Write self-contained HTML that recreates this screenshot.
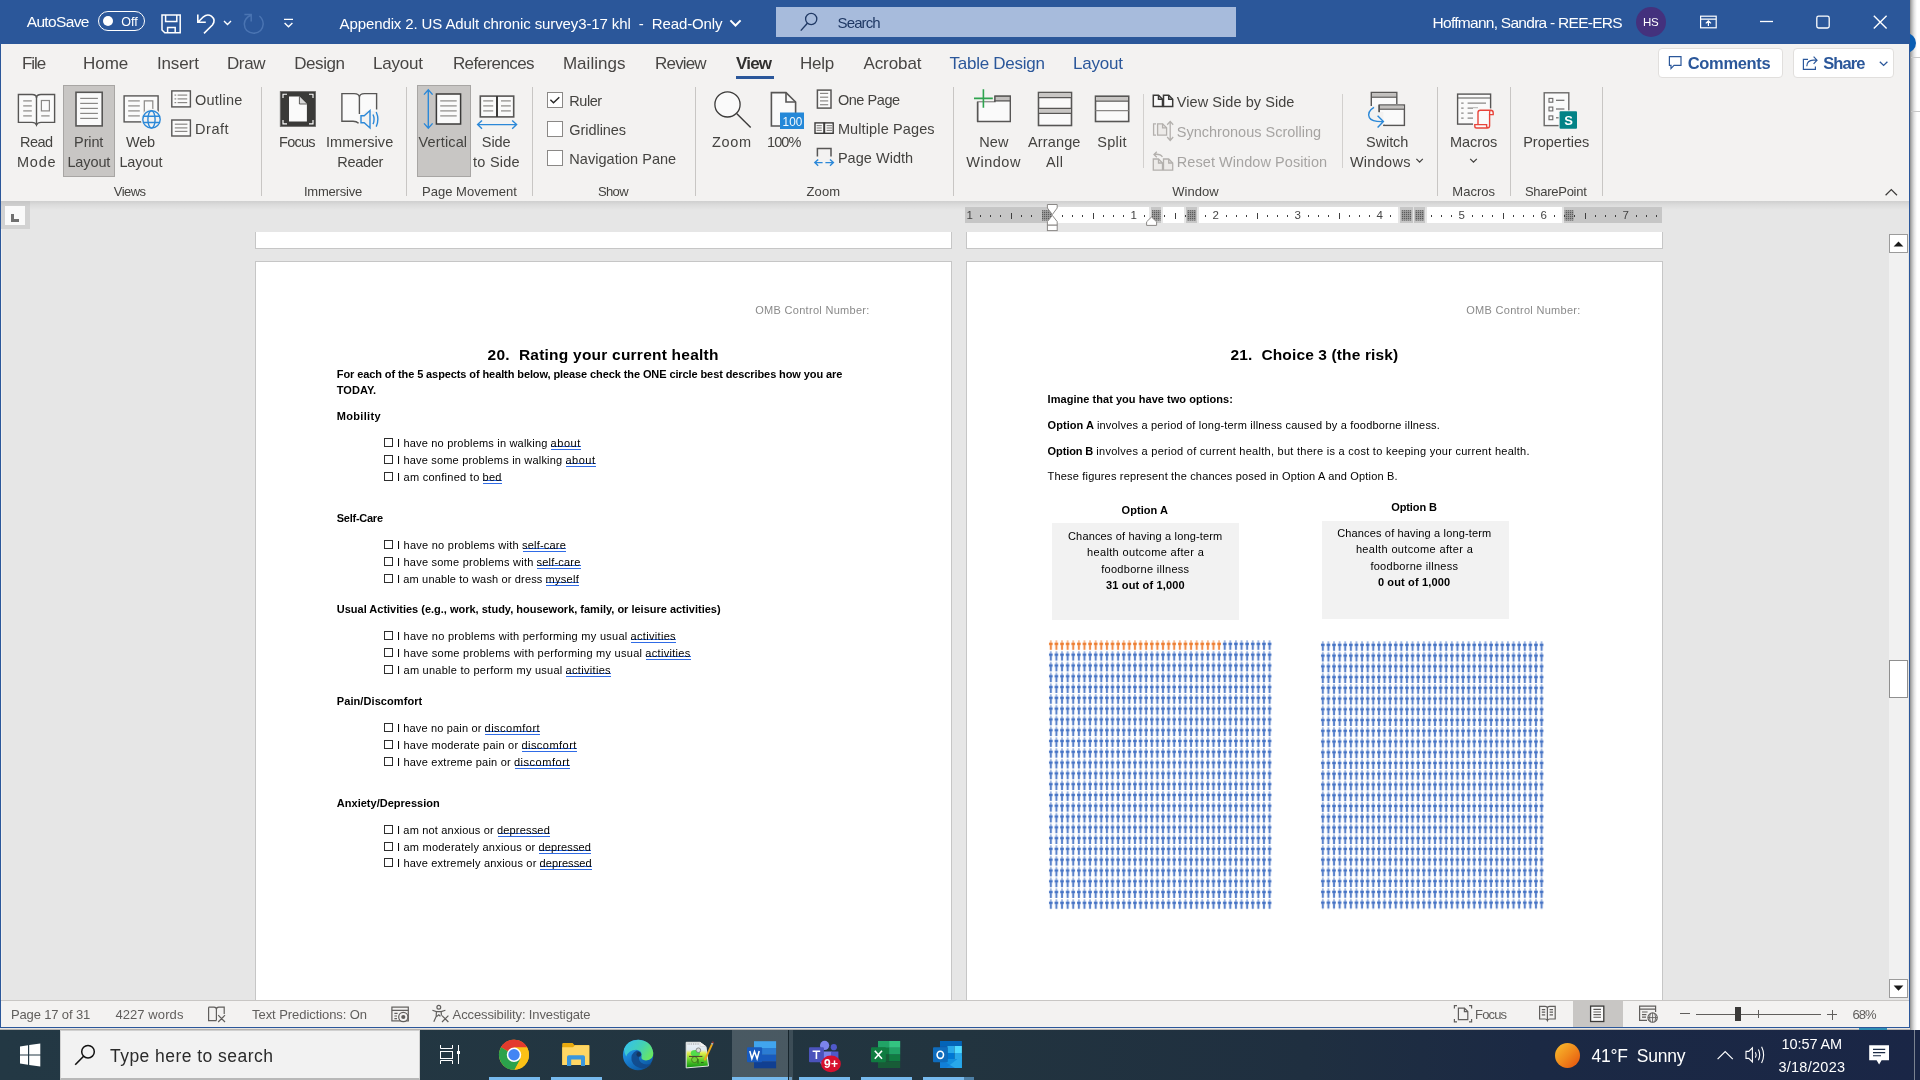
<!DOCTYPE html>
<html><head><meta charset="utf-8"><title>Word</title><style>
html,body{margin:0;padding:0;}
body{width:1920px;height:1080px;overflow:hidden;position:relative;background:#fff;font-family:"Liberation Sans",sans-serif;}
#r{position:absolute;left:0;top:0;width:1920px;height:1080px;will-change:transform;}
#r div,#r span,#r svg{position:absolute;}
#r span{white-space:pre;line-height:1;}
#r svg{overflow:visible;}
</style></head><body><div id="r">
<div style="left:1910px;top:0px;width:10px;height:1030px;background:#ffffff;"></div>
<div style="left:1910px;top:0px;width:7px;height:1030px;background:linear-gradient(90deg,#8e8e8e 0,#b9b9b9 25%,#e4e4e4 60%,#ffffff 100%);"></div>
<div style="left:1911px;top:57px;width:9px;height:1px;background:#c8c8c8;"></div>
<div style="left:1911px;top:111px;width:9px;height:1px;background:#c8c8c8;"></div>
<div style="left:1896px;top:33px;width:20px;height:20px;background:#0a5db3;border-radius:10px;"></div>
<div style="left:0px;top:0px;width:1910px;height:44px;background:#2b579a;"></div>
<div style="left:0px;top:44px;width:1910px;height:157px;background:#f3f2f1;"></div>
<div style="left:0px;top:201px;width:1910px;height:799px;background:#e6e6e6;"></div>
<div style="left:0px;top:201px;width:1910px;height:9px;background:linear-gradient(180deg,#cfcfcf 0,#dcdcdc 45%,#e6e6e6 100%);"></div>
<div style="left:0px;top:44px;width:1px;height:984px;background:#2b579a;"></div>
<div style="left:1909px;top:44px;width:1px;height:984px;background:#2b579a;"></div>
<div style="left:776px;top:7px;width:460px;height:30px;background:#a7bbdc;"></div>
<div style="left:1636px;top:7px;width:30px;height:30px;background:#44317d;border-radius:15px;"></div>
<div style="left:98px;top:11px;width:47px;height:20px;background:transparent;border:1.4px solid #fff;border-radius:10px;box-sizing:border-box;"></div>
<div style="left:102.8px;top:16px;width:10px;height:10px;background:#fff;border-radius:5px;"></div>
<div style="left:736px;top:76px;width:38px;height:3px;background:#2b579a;"></div>
<div style="left:1658px;top:48px;width:125px;height:30px;background:#fff;border:1px solid #e1dfdd;border-radius:4px;box-sizing:border-box;"></div>
<div style="left:1793px;top:48px;width:101px;height:30px;background:#fff;border:1px solid #e1dfdd;border-radius:4px;box-sizing:border-box;"></div>
<div style="left:63px;top:85px;width:52px;height:92px;background:#c8c6c4;border:1px solid #a8a6a4;box-sizing:border-box;"></div>
<div style="left:417px;top:85px;width:54px;height:92px;background:#c8c6c4;border:1px solid #a8a6a4;box-sizing:border-box;"></div>
<div style="left:261px;top:87px;width:1px;height:109px;background:#c8c6c4;"></div>
<div style="left:406px;top:87px;width:1px;height:109px;background:#c8c6c4;"></div>
<div style="left:532px;top:87px;width:1px;height:109px;background:#c8c6c4;"></div>
<div style="left:695px;top:87px;width:1px;height:109px;background:#c8c6c4;"></div>
<div style="left:953px;top:87px;width:1px;height:109px;background:#c8c6c4;"></div>
<div style="left:1437px;top:87px;width:1px;height:109px;background:#c8c6c4;"></div>
<div style="left:1510px;top:87px;width:1px;height:109px;background:#c8c6c4;"></div>
<div style="left:1602px;top:87px;width:1px;height:109px;background:#c8c6c4;"></div>
<div style="left:1143px;top:94px;width:1px;height:74px;background:#d2d0ce;"></div>
<div style="left:1342px;top:94px;width:1px;height:74px;background:#d2d0ce;"></div>
<div style="left:547px;top:92px;width:16px;height:16px;background:#fff;border:1px solid #8a8886;box-sizing:border-box;"></div>
<div style="left:547px;top:121px;width:16px;height:16px;background:#fff;border:1px solid #8a8886;box-sizing:border-box;"></div>
<div style="left:547px;top:150px;width:16px;height:16px;background:#fff;border:1px solid #8a8886;box-sizing:border-box;"></div>
<div style="left:965px;top:207px;width:83px;height:16px;background:#c6c6c6;"></div>
<div style="left:1048px;top:207px;width:101px;height:16px;background:#fff;"></div>
<div style="left:1151px;top:207px;width:10px;height:16px;background:#c6c6c6;"></div>
<div style="left:1163px;top:207px;width:21px;height:16px;background:#fff;"></div>
<div style="left:1186px;top:207px;width:11px;height:16px;background:#c6c6c6;"></div>
<div style="left:1199px;top:207px;width:199px;height:16px;background:#fff;"></div>
<div style="left:1400px;top:207px;width:12.5px;height:16px;background:#c6c6c6;"></div>
<div style="left:1414px;top:207px;width:11px;height:16px;background:#c6c6c6;"></div>
<div style="left:1427px;top:207px;width:135px;height:16px;background:#fff;"></div>
<div style="left:1564px;top:207px;width:98px;height:16px;background:#c6c6c6;"></div>
<div style="left:1px;top:229px;width:1px;height:771px;background:#f0efee;"></div>
<div style="left:1px;top:201px;width:29px;height:28px;background:#d2d2d2;"></div>
<div style="left:1px;top:201px;width:29px;height:6px;background:linear-gradient(180deg,#c6c6c6,#d2d2d2);"></div>
<div style="left:5px;top:206px;width:20.3px;height:19.4px;background:#fafafa;"></div>
<div style="left:11px;top:214px;width:3px;height:8px;background:#707070;"></div>
<div style="left:11px;top:219px;width:8px;height:3px;background:#707070;"></div>
<div style="left:255px;top:232px;width:697px;height:17px;background:#fff;border:1px solid #c6c6c6;border-top:none;box-sizing:border-box;"></div>
<div style="left:255px;top:261px;width:697px;height:739px;background:#fff;border:1px solid #c6c6c6;border-bottom:none;box-sizing:border-box;"></div>
<div style="left:966px;top:232px;width:697px;height:17px;background:#fff;border:1px solid #c6c6c6;border-top:none;box-sizing:border-box;"></div>
<div style="left:966px;top:261px;width:697px;height:739px;background:#fff;border:1px solid #c6c6c6;border-bottom:none;box-sizing:border-box;"></div>
<div style="left:1052px;top:523px;width:187px;height:97px;background:#f2f2f2;"></div>
<div style="left:1322px;top:521px;width:187px;height:98px;background:#f2f2f2;"></div>
<div style="left:1889px;top:234px;width:19px;height:764px;background:#f1f1f1;"></div>
<div style="left:1889px;top:234px;width:19px;height:19px;background:#fff;border:1px solid #9b9b9b;box-sizing:border-box;"></div>
<div style="left:1889px;top:979px;width:19px;height:19px;background:#fff;border:1px solid #9b9b9b;box-sizing:border-box;"></div>
<div style="left:1889px;top:660px;width:19px;height:38px;background:#fff;border:1px solid #8f8f8f;box-sizing:border-box;"></div>
<div style="left:1px;top:1000px;width:1908px;height:1px;background:#c8c6c4;"></div>
<div style="left:1px;top:1001px;width:1908px;height:26px;background:#f3f2f1;"></div>
<div style="left:0px;top:1027px;width:1910px;height:1px;background:#2b579a;"></div>
<div style="left:0px;top:1028px;width:1910px;height:1px;background:#e6e4e1;"></div>
<div style="left:0px;top:1029px;width:1910px;height:1px;background:#b6b3af;"></div>
<div style="left:1859px;top:1028px;width:28px;height:2px;background:#2f8fb5;"></div>
<div style="left:1573px;top:1001px;width:50px;height:26px;background:#c8c6c4;"></div>
<div style="left:1696px;top:1014px;width:125px;height:1px;background:#605e5c;"></div>
<div style="left:1735px;top:1007px;width:6px;height:14px;background:#3b3a39;"></div>
<div style="left:1758px;top:1010px;width:1px;height:8px;background:#605e5c;"></div>
<div style="left:1680px;top:1013px;width:10px;height:1px;background:#605e5c;"></div>
<div style="left:1827px;top:1014px;width:10px;height:1px;background:#605e5c;"></div>
<div style="left:1831.5px;top:1009.5px;width:1px;height:10px;background:#605e5c;"></div>
<div style="left:0px;top:1030px;width:1920px;height:50px;background:linear-gradient(90deg,#233844 0,#22343f 50%,#1f2f40 68%,#1b2944 80%,#1a2646 100%);"></div>
<div style="left:60px;top:1030px;width:360px;height:50px;background:#f2f2f2;border:1px solid #d0d0d0;border-bottom:2px solid #b8b8b8;box-sizing:border-box;"></div>
<div style="left:732px;top:1030px;width:56px;height:50px;background:rgba(255,255,255,0.18);"></div>
<div style="left:489px;top:1077px;width:51px;height:3px;background:#76b9ed;"></div>
<div style="left:551px;top:1077px;width:51px;height:3px;background:#76b9ed;"></div>
<div style="left:732px;top:1077px;width:56px;height:3px;background:#76b9ed;"></div>
<div style="left:799px;top:1077px;width:51px;height:3px;background:#76b9ed;"></div>
<div style="left:861px;top:1077px;width:51px;height:3px;background:#76b9ed;"></div>
<div style="left:923px;top:1077px;width:41px;height:3px;background:#76b9ed;"></div>
<div style="left:789px;top:1077px;width:3px;height:3px;background:#5a8cb5;"></div>
<div style="left:964px;top:1077px;width:10px;height:3px;background:#4d7fa5;"></div>
<div style="left:789px;top:1030px;width:4px;height:50px;background:rgba(255,255,255,0.12);"></div>
<div style="left:788px;top:1030px;width:1px;height:50px;background:rgba(0,0,0,0.3);"></div>
<div style="left:1914px;top:1030px;width:1px;height:50px;background:#7a8290;"></div>
<div style="left:1554.5px;top:1042.5px;width:25px;height:25px;background:linear-gradient(135deg,#f7b52c 10%,#f08a1c 50%,#e65a10 90%);border-radius:13px;"></div>
<svg style="left:1047.9px;top:640.3px;" width="224.4" height="269.75" viewBox="0 0 224.4 269.75"><defs><pattern id="pb" width="5.61" height="10.79" patternUnits="userSpaceOnUse"><g fill="#4472c4"><rect x="2.2" y="0.15" width="1.2" height="2.4" rx="0.4" opacity="0.8"/><path d="M1.0 3.1Q1.0 2.4 1.8 2.4H3.8Q4.6 2.4 4.6 3.1V4.7L3.9 5.3H1.7L1.0 4.7Z"/><rect x="1.75" y="5.1" width="2.1" height="4.7" opacity="0.88"/></g></pattern><pattern id="po" width="5.61" height="10.79" patternUnits="userSpaceOnUse"><g fill="#ed7d31"><rect x="2.2" y="0.15" width="1.2" height="2.4" rx="0.4" opacity="0.8"/><path d="M1.0 3.1Q1.0 2.4 1.8 2.4H3.8Q4.6 2.4 4.6 3.1V4.7L3.9 5.3H1.7L1.0 4.7Z"/><rect x="1.75" y="5.1" width="2.1" height="4.7" opacity="0.88"/></g></pattern><pattern id="pc" width="5.61" height="10.74" patternUnits="userSpaceOnUse"><g fill="#4472c4"><rect x="2.2" y="0.15" width="1.2" height="2.4" rx="0.4" opacity="0.8"/><path d="M1.0 3.1Q1.0 2.4 1.8 2.4H3.8Q4.6 2.4 4.6 3.1V4.7L3.9 5.3H1.7L1.0 4.7Z"/><rect x="1.75" y="5.1" width="2.1" height="4.7" opacity="0.88"/></g></pattern></defs><rect x="0" y="0" width="224.4" height="269.75" fill="url(#pb)"/><rect x="0" y="0" width="173.91" height="10.79" fill="#fff"/><rect x="0" y="0" width="173.91" height="10.79" fill="url(#po)"/></svg>
<svg style="left:1320.2px;top:640.9px;" width="224.4" height="268.5" viewBox="0 0 224.4 268.5"><rect x="0" y="0" width="224.4" height="268.5" fill="url(#pc)"/></svg>
<div style="left:384px;top:438px;width:9px;height:9px;border:1px solid #2e2e2e;box-sizing:border-box;"></div>
<div style="left:551.2px;top:446px;width:29.7px;height:1px;background:#2f6be6;"></div>
<div style="left:551.2px;top:449px;width:29.7px;height:1px;background:#2f6be6;"></div>
<div style="left:384px;top:455px;width:9px;height:9px;border:1px solid #2e2e2e;box-sizing:border-box;"></div>
<div style="left:566.0px;top:463px;width:29.7px;height:1px;background:#2f6be6;"></div>
<div style="left:566.0px;top:466px;width:29.7px;height:1px;background:#2f6be6;"></div>
<div style="left:384px;top:472px;width:9px;height:9px;border:1px solid #2e2e2e;box-sizing:border-box;"></div>
<div style="left:483.2px;top:480px;width:18.9px;height:1px;background:#2f6be6;"></div>
<div style="left:483.2px;top:483px;width:18.9px;height:1px;background:#2f6be6;"></div>
<div style="left:384px;top:540px;width:9px;height:9px;border:1px solid #2e2e2e;box-sizing:border-box;"></div>
<div style="left:522.6px;top:548px;width:43.8px;height:1px;background:#2f6be6;"></div>
<div style="left:522.6px;top:551px;width:43.8px;height:1px;background:#2f6be6;"></div>
<div style="left:384px;top:557px;width:9px;height:9px;border:1px solid #2e2e2e;box-sizing:border-box;"></div>
<div style="left:537.2px;top:565px;width:43.7px;height:1px;background:#2f6be6;"></div>
<div style="left:537.2px;top:568px;width:43.7px;height:1px;background:#2f6be6;"></div>
<div style="left:384px;top:574px;width:9px;height:9px;border:1px solid #2e2e2e;box-sizing:border-box;"></div>
<div style="left:546.2px;top:582px;width:33.2px;height:1px;background:#2f6be6;"></div>
<div style="left:546.2px;top:585px;width:33.2px;height:1px;background:#2f6be6;"></div>
<div style="left:384px;top:631px;width:9px;height:9px;border:1px solid #2e2e2e;box-sizing:border-box;"></div>
<div style="left:631.2px;top:639px;width:45.0px;height:1px;background:#2f6be6;"></div>
<div style="left:631.2px;top:642px;width:45.0px;height:1px;background:#2f6be6;"></div>
<div style="left:384px;top:648px;width:9px;height:9px;border:1px solid #2e2e2e;box-sizing:border-box;"></div>
<div style="left:645.9px;top:656px;width:45.0px;height:1px;background:#2f6be6;"></div>
<div style="left:645.9px;top:659px;width:45.0px;height:1px;background:#2f6be6;"></div>
<div style="left:384px;top:665px;width:9px;height:9px;border:1px solid #2e2e2e;box-sizing:border-box;"></div>
<div style="left:566.2px;top:673px;width:45.0px;height:1px;background:#2f6be6;"></div>
<div style="left:566.2px;top:676px;width:45.0px;height:1px;background:#2f6be6;"></div>
<div style="left:384px;top:723px;width:9px;height:9px;border:1px solid #2e2e2e;box-sizing:border-box;"></div>
<div style="left:485.2px;top:731px;width:55.0px;height:1px;background:#2f6be6;"></div>
<div style="left:485.2px;top:734px;width:55.0px;height:1px;background:#2f6be6;"></div>
<div style="left:384px;top:740px;width:9px;height:9px;border:1px solid #2e2e2e;box-sizing:border-box;"></div>
<div style="left:522.0px;top:748px;width:55.0px;height:1px;background:#2f6be6;"></div>
<div style="left:522.0px;top:751px;width:55.0px;height:1px;background:#2f6be6;"></div>
<div style="left:384px;top:757px;width:9px;height:9px;border:1px solid #2e2e2e;box-sizing:border-box;"></div>
<div style="left:514.5px;top:765px;width:55.5px;height:1px;background:#2f6be6;"></div>
<div style="left:514.5px;top:768px;width:55.5px;height:1px;background:#2f6be6;"></div>
<div style="left:384px;top:825px;width:9px;height:9px;border:1px solid #2e2e2e;box-sizing:border-box;"></div>
<div style="left:497.5px;top:833px;width:52.9px;height:1px;background:#2f6be6;"></div>
<div style="left:497.5px;top:836px;width:52.9px;height:1px;background:#2f6be6;"></div>
<div style="left:384px;top:842px;width:9px;height:9px;border:1px solid #2e2e2e;box-sizing:border-box;"></div>
<div style="left:539.2px;top:850px;width:52.3px;height:1px;background:#2f6be6;"></div>
<div style="left:539.2px;top:853px;width:52.3px;height:1px;background:#2f6be6;"></div>
<div style="left:384px;top:858px;width:9px;height:9px;border:1px solid #2e2e2e;box-sizing:border-box;"></div>
<div style="left:540.2px;top:866px;width:52.0px;height:1px;background:#2f6be6;"></div>
<div style="left:540.2px;top:869px;width:52.0px;height:1px;background:#2f6be6;"></div>
<svg style="left:0;top:0" width="1920" height="1080" viewBox="0 0 1920 1080"><style>.k{stroke:#575655;stroke-width:1.4;fill:#fafafa}.kn{stroke:#575655;stroke-width:1.4;fill:none}.d{stroke:#3b3a39;stroke-width:1.5;fill:#fafafa}.g{stroke:#8a8886;stroke-width:1.2;fill:none}.b{stroke:#2b88d8;stroke-width:1.4;fill:none}.w{stroke:#fff;stroke-width:1.5;fill:none}.q{stroke:#b3b0ad;stroke-width:1.3;fill:#edebe9}.qn{stroke:#b3b0ad;stroke-width:1.3;fill:none}.s{stroke:#605e5c;stroke-width:1.2;fill:none}</style><path class="k" d="M18.4 94.5H32Q36.5 94.5 36.5 98Q36.5 94.5 41 94.5H54.6V122.4H41Q37.5 122.4 36.5 125Q35.5 122.4 32 122.4H18.4Z"/><path class="kn" d="M36.5 97V124"/><path class="g" d="M23.2 100.9H31.8"/><path class="g" d="M23.2 105.9H31.8"/><path class="g" d="M23.2 110.9H31.8"/><path class="g" d="M23.2 115.9H31.8"/><rect class="g" x="41.4" y="100.5" width="8" height="10.4"/><path class="g" d="M41.2 115.9H49.6"/><rect class="k" x="76" y="92.3" width="26.2" height="33.6" style="stroke-width:1.6"/><path class="g" d="M80.2 98.4H97.9"/><path class="g" d="M80.2 103.4H97.9"/><path class="g" d="M80.2 108.4H97.9"/><path class="g" d="M80.2 113.4H97.9"/><path class="g" d="M80.2 118.4H97.9"/><rect class="k" x="124.1" y="95.9" width="34" height="26"/><path class="g" d="M128.2 100.9H139.8"/><path class="g" d="M128.2 105.9H139.8"/><path class="g" d="M128.2 110.9H139.8"/><path class="g" d="M128.2 115.9H139.8"/><path class="g" d="M144.3 114V100.9H152.8V110"/><circle cx="151.5" cy="119.4" r="10.6" fill="#f3f2f1"/><g class="b"><circle cx="151.5" cy="119.4" r="8.7"/><ellipse cx="151.5" cy="119.4" rx="3.6" ry="8.7"/><path d="M143.4 116.3H159.6M143.4 122.5H159.6"/></g><rect class="k" x="171.8" y="90.9" width="18.6" height="16"/><path class="g" d="M177.6 95.1H187.2"/><path class="g" d="M177.6 98.9H187.2"/><path class="g" d="M177.6 102.6H187.2"/><path class="g" d="M174.5 95.1H176.2"/><path class="g" d="M174.5 98.9H176.2"/><path class="g" d="M174.5 102.6H176.2"/><rect class="k" x="171.8" y="120" width="18.6" height="16"/><path class="g" d="M174.8 124.2H187.4"/><path class="g" d="M174.8 127.9H187.4"/><path class="g" d="M174.8 131.4H187.4"/><rect x="280.3" y="91.6" width="35.2" height="34.8" fill="#3a3a38" stroke="#6b6a69" stroke-width="0.9"/><path d="M289 96.5H299.4L306.9 104V121.5H289Z" fill="#fafafa"/><path d="M299.4 96.5V104H306.9" fill="#d8d8d8" stroke="#3a3a38" stroke-width="0.8"/><path d="M283 98V94.2H287M309 94.2H313V98M313 120V123.8H309M287 123.8H283V120" stroke="#ffffff" stroke-width="1.15" fill="none"/><path d="M341.9 93.6H354Q359.4 93.6 359.4 97.5Q359.4 93.6 364.5 93.6H376.6V111H366L359.4 116V123Q358.2 121.2 354 121.2H341.9Z" fill="#fafafa"/><path class="kn" d="M359.4 114V97.5Q359.4 93.6 354 93.6H341.9V121.2H353Q356.6 121.2 358.6 123.2M359.4 97.5Q359.4 93.6 364.5 93.6H376.6V109.4"/><path class="b" d="M361 115.8H364.2L370 110.6V128L364.2 122.8H361Z" fill="#fafafa"/><path class="b" d="M373 114.5Q375.2 119.3 373 124.1M376.2 112Q379.6 119.3 376.2 126.6"/><path class="b" d="M428.3 90V128M424 94.6L428.3 89.8L432.6 94.6M424 123.4L428.3 128.2L432.6 123.4"/><rect class="d" x="436.4" y="94" width="24.2" height="30"/><path class="g" d="M440.2 100.9H456.7"/><path class="g" d="M440.2 105.9H456.7"/><path class="g" d="M440.2 110.9H456.7"/><path class="g" d="M440.2 115.9H456.7"/><rect class="k" x="480.3" y="96.1" width="33.4" height="20.8" style="stroke-width:1.6"/><path d="M497 96V117" stroke="#3b3a39" stroke-width="2"/><path class="g" d="M483.2 100.9H493.2"/><path class="g" d="M483.2 105.9H493.2"/><path class="g" d="M483.2 110.9H493.2"/><path class="g" d="M501 100.9H510.8"/><path class="g" d="M501 105.9H510.8"/><path class="g" d="M501 110.9H510.8"/><path class="b" d="M478 124.6H516.2M482 120.4L477.6 124.6L482 128.8M512.2 120.4L516.6 124.6L512.2 128.8"/><path d="M550.4 99.8L553.5 102.8L559.3 97.2" stroke="#252423" stroke-width="1.4" fill="none"/><circle class="d" cx="727.5" cy="104.4" r="12.6" style="stroke-width:1.3"/><path class="d" d="M736.6 113.6L750.7 127.5" style="stroke-width:1.4"/><path class="k" d="M771.4 92.6H786L795.6 102V126H771.4Z" style="stroke-width:1.6"/><path class="kn" d="M786 92.6V102H795.6" style="stroke-width:1.6"/><rect x="780" y="112.5" width="24" height="16.5" fill="#2488d8"/><text x="782.6" y="126.2" font-size="13.6" fill="#f4f9fd" textLength="19.6" lengthAdjust="spacingAndGlyphs" font-family="Liberation Sans, sans-serif">100</text><rect class="k" x="817.4" y="90.1" width="13.6" height="18" style="stroke-width:1.5"/><path class="g" d="M820 93.4H828.2"/><path class="g" d="M820 97.2H828.2"/><path class="g" d="M820 100.9H828.2"/><path class="g" d="M820 104.7H828.2"/><rect class="d" x="815" y="122.9" width="18.2" height="10.4" style="stroke-width:1.4"/><path d="M824.2 122.5V133.8" stroke="#3b3a39" stroke-width="2"/><path class="g" d="M816.6 125.6H821.8"/><path class="g" d="M816.6 128H821.8"/><path class="g" d="M816.6 130.4H821.8"/><path class="g" d="M826.6 125.6H832"/><path class="g" d="M826.6 128H832"/><path class="g" d="M826.6 130.4H832"/><path class="kn" d="M817.4 156.6V148.4H831V156.6" style="stroke-width:1.5"/><path class="b" d="M815 162.6H822.6M818.2 159.4L814.8 162.6L818.2 165.8M825.4 162.6H833.2M830 159.4L833.4 162.6L830 165.8"/><path class="k" d="M977.6 101.5V121.5H1010.3V96.2H995V101.5Z" /><rect x="995" y="96.2" width="15.3" height="4.7" fill="#c2c0be" stroke="#575655" stroke-width="1.3"/><rect x="973" y="88" width="21" height="13.4" fill="#f3f2f1"/><path class="kn" d="M977.6 102V121.5"/><path d="M974 98.4H992.8M983.4 89.2V107.8" stroke="#2ea44f" stroke-width="1.6" fill="none"/><rect class="k" x="1038.5" y="92.5" width="33" height="33" style="stroke-width:1.6"/><rect x="1039.3" y="93.3" width="31.4" height="3.8" fill="#c8c6c4"/><rect x="1039.3" y="109" width="31.4" height="3.8" fill="#c8c6c4"/><path class="kn" d="M1038.5 97.6H1071.5M1038.5 108.4H1071.5M1038.5 113.4H1071.5" style="stroke-width:1.3"/><rect class="k" x="1095.5" y="96.2" width="33.2" height="25.3" style="stroke-width:1.6"/><rect x="1096.3" y="97" width="31.6" height="3.6" fill="#c8c6c4"/><path class="kn" d="M1095.5 101.2H1128.7" style="stroke-width:1.3"/><path class="g" d="M1095.5 110.7H1128.7"/><path class="d" d="M1153.3 95.3H1158.5L1162.5 99.3V106.5H1153.3Z"/><path class="d" d="M1158.5 95.3V99.3H1162.5" style="fill:none"/><path class="d" d="M1163.5 95.3H1168.7L1172.7 99.3V106.5H1163.5Z"/><path class="d" d="M1168.7 95.3V99.3H1172.7" style="fill:none"/><path class="qn" d="M1156 123.8H1153.6V135.2H1156"/><path class="q" d="M1157.6 123.8H1162.6L1166.6 127.8V135.2H1157.6Z"/><path class="qn" d="M1162.6 123.8V127.8H1166.6"/><path class="qn" d="M1170.2 121.6V140.2M1167.2 124.8L1170.2 121.4L1173.2 124.8M1167.2 137L1170.2 140.4L1173.2 137"/><path class="q" d="M1153.3 159H1158.5L1162.5 163V170.2H1153.3Z"/><path class="q" d="M1158.5 159V163H1162.5" style="fill:none"/><path class="q" d="M1163.5 159H1168.7L1172.7 163V170.2H1163.5Z"/><path class="q" d="M1168.7 159V163H1172.7" style="fill:none"/><path class="qn" d="M1162.4 157Q1160.5 153.6 1154.2 154.4M1156.8 151.8L1154 154.4L1156.8 157.2"/><path class="k" d="M1371.3 106V92.5H1396.8V104"/><rect x="1372" y="93.2" width="24.1" height="3.6" fill="#c2c0be"/><path class="kn" d="M1371.3 97.2H1396.8" style="stroke-width:1.2"/><rect class="k" x="1379.2" y="105" width="25.2" height="20.4"/><rect x="1380" y="105.8" width="23.6" height="3" fill="#c2c0be"/><path class="kn" d="M1379.2 109.2H1404.4" style="stroke-width:1.2"/><rect x="1366" y="112" width="17.4" height="18" fill="#f3f2f1"/><path class="kn" d="M1379.2 105V112.2M1383.2 125.4H1385"/><path class="b" d="M1374 107.4Q1366.8 111.6 1369.4 117.6Q1371.6 121.8 1382.6 121.6M1377.6 115.8L1383.4 121.6L1377.6 127.6"/><path d="M1416.4 158.9L1419.6 162.1L1422.8 158.9M1470.2 158.9L1473.5 162.2L1476.8 158.9" stroke="#444340" stroke-width="1.3" fill="none"/><rect class="k" x="1457.6" y="94.1" width="33" height="30"/><path class="kn" d="M1457.6 98H1490.6" style="stroke-width:1.2"/><path class="g" d="M1461.2 103.2H1463.6M1467.6 103.2H1486"/><path class="g" d="M1461.2 108.2H1463.6M1467.6 108.2H1478"/><path class="g" d="M1461.2 113.2H1463.6M1467.6 113.2H1478"/><path class="g" d="M1461.2 118.1H1463.6M1467.6 118.1H1478"/><rect x="1473" y="108.4" width="22" height="21" fill="#f3f2f1"/><rect x="1473" y="108.4" width="16.9" height="15" fill="#fafafa"/><path d="M1478 124.6V112.4Q1478 110.2 1480.2 110.2H1490.4Q1493.2 110.2 1493.2 112.8V114.6H1489.6V125.8Q1489.6 128 1487.2 128H1476.6Q1474.8 128 1474.8 126.2V124.6H1486.6V126.2Q1486.8 127.8 1488 127.8" stroke="#e8443a" stroke-width="1.4" fill="#fafafa"/><path d="M1489.6 114.6V112.4Q1489.6 110.4 1491.2 110.4" stroke="#e8443a" stroke-width="1.3" fill="none"/><rect class="k" x="1544.2" y="92.8" width="24.6" height="32.8" style="stroke:#6a6968"/><rect x="1549" y="98.39999999999999" width="3.8" height="3.8" class="g" style="stroke:#6a6968;stroke-width:1.1"/><path class="g" d="M1556 100.3H1564.4" style="stroke:#6a6968"/><rect x="1549" y="107.1" width="3.8" height="3.8" class="g" style="stroke:#6a6968;stroke-width:1.1"/><path class="g" d="M1556 109H1564.4" style="stroke:#6a6968"/><rect x="1549" y="115.89999999999999" width="3.8" height="3.8" class="g" style="stroke:#6a6968;stroke-width:1.1"/><path class="g" d="M1556 117.8H1564.4" style="stroke:#6a6968"/><rect x="1558.6" y="110.4" width="19.2" height="19.2" fill="#f3f2f1"/><rect x="1559.6" y="111.3" width="17.4" height="17.4" rx="1" fill="#038387"/><text x="1564.3" y="124.6" font-size="13" font-weight="700" fill="#fff" font-family="Liberation Sans, sans-serif">S</text><path d="M1885.6 195.2L1891.3 189.6L1897 195.2" stroke="#3b3a39" stroke-width="1.2" fill="none"/><path class="w" d="M162 15H180.2V32.8H164.8L162 30Z"/><path class="w" d="M165.6 15V21.6H176.8V15M167.6 32.8V27.6H175.2V32.8"/><path class="w" d="M197.8 14.6V22.2H205.8M198.4 21.8L203.4 16.8Q207.4 13.6 211.4 16.2Q216.2 20 212.4 25L204 33.4" style="stroke-width:1.6"/><path class="w" d="M224 20.9L227.5 24.4L231 20.9" style="stroke-width:1.4"/><path d="M244.4 14.6H251.2V21.4M251.2 15.2Q244.6 17.6 244.3 24Q244.6 32.6 253.8 33.2Q262.6 32.6 263.2 24Q263 18.8 259.4 16" stroke="#4a74b2" stroke-width="1.5" fill="none"/><path class="w" d="M284 19.4H293M284.6 23L288.5 26.8L292.4 23" style="stroke-width:1.4"/><path class="w" d="M730.4 20.4L735.5 25.5L740.6 20.4" style="stroke-width:2"/><circle cx="811.2" cy="19" r="5.6" stroke="#1f3864" stroke-width="1.3" fill="none"/><path d="M807.4 23.2L800.8 30.6" stroke="#1f3864" stroke-width="1.4"/><rect class="w" x="1700.6" y="16.2" width="15.6" height="11.6" style="stroke-width:1.2"/><path class="w" d="M1700.6 19.2H1716.2M1708.4 26V21M1705.8 23.4L1708.4 20.8L1711 23.4" style="stroke-width:1.2"/><path class="w" d="M1760 21.5H1773" style="stroke-width:1.3"/><rect class="w" x="1816.8" y="16.2" width="12.4" height="11.8" rx="1.8" style="stroke-width:1.3"/><path class="w" d="M1873.8 15.8L1886.6 28.4M1886.6 15.8L1873.8 28.4" style="stroke-width:1.4"/><path d="M1669.4 56.6H1681V65.4H1674L1671 68.6V65.4H1669.4Z" stroke="#2b579a" stroke-width="1.2" fill="none"/><path d="M1808 59.4H1803.4V69.4H1815.4V66.4M1806.8 66.2Q1807 60.4 1813.2 60.2H1816.6M1813.6 56.6L1817 60.2L1813.6 63.8" stroke="#2b579a" stroke-width="1.2" fill="none"/><path d="M1879.8 61.8L1883.6 65.4L1887.4 61.8" stroke="#2b579a" stroke-width="1.3" fill="none"/><defs><pattern id="gd" width="2" height="2" patternUnits="userSpaceOnUse"><rect width="2" height="2" fill="#a2a2a2"/><rect width="1.2" height="1.2" fill="#5a5a5a"/></pattern></defs><rect x="1042" y="210.2" width="10" height="10.4" fill="url(#gd)"/><rect x="1152" y="210.2" width="8.6" height="10.4" fill="url(#gd)"/><rect x="1187" y="210.2" width="9" height="10.4" fill="url(#gd)"/><rect x="1401.4" y="210.2" width="10" height="10.4" fill="url(#gd)"/><rect x="1415" y="210.2" width="9" height="10.4" fill="url(#gd)"/><rect x="1564.6" y="210.2" width="9" height="10.4" fill="url(#gd)"/><path d="M980.5 215V217M990.5 215V217M1000.5 215V217M1011.5 213V219M1021.5 215V217M1031.5 215V217M1062.5 215V217M1072.5 215V217M1082.5 215V217M1093.5 213V219M1103.5 215V217M1113.5 215V217M1123.5 215V217M1144.5 215V217M1164.5 215V217M1175.5 213V219M1185.5 215V217M1205.5 215V217M1226.5 215V217M1236.5 215V217M1246.5 215V217M1257.5 213V219M1267.5 215V217M1277.5 215V217M1287.5 215V217M1308.5 215V217M1318.5 215V217M1328.5 215V217M1339.5 213V219M1349.5 215V217M1359.5 215V217M1369.5 215V217M1390.5 215V217M1431.5 215V217M1441.5 215V217M1451.5 215V217M1472.5 215V217M1482.5 215V217M1492.5 215V217M1503.5 213V219M1513.5 215V217M1523.5 215V217M1533.5 215V217M1554.5 215V217M1564.5 215V217M1574.5 215V217M1585.5 213V219M1595.5 215V217M1605.5 215V217M1615.5 215V217M1636.5 215V217M1646.5 215V217M1656.5 215V217" stroke="#3e3e3e" stroke-width="1" fill="none"/><g fill="#fff" stroke="#8a8886" stroke-width="1"><path d="M1047.4 204.5H1057.2V208L1052.3 214.6L1047.4 208Z"/><path d="M1052.3 215.4L1057.2 221.6V225.2H1047.4V221.6Z"/><rect x="1047.4" y="225.2" width="9.8" height="5.4"/><path d="M1151.5 217L1156.6 221.8V225.4H1146.6V221.8Z"/></g><path class="s" d="M208.6 1007.2H214Q216.4 1007.2 216.4 1009.6Q216.4 1007.2 218.8 1007.2H224.2V1014M216.4 1009.6V1020.6M216.4 1020.6H208.6V1007.2M218.2 1015.2L225 1022M225 1015.2L218.2 1022"/><rect class="s" x="391.9" y="1007.1" width="16.4" height="13.8"/><path class="s" d="M391.9 1010.4H408.3M394.4 1013.4H397.6M394.4 1016H397M394.4 1018.6H397"/><circle cx="403.3" cy="1017" r="4.6" fill="#f3f2f1" stroke="#605e5c" stroke-width="1.2"/><circle cx="403.3" cy="1017" r="2.1" fill="#605e5c"/><circle class="s" cx="438.8" cy="1007.2" r="1.9"/><path class="s" d="M432.4 1010.2L436.4 1011.6H441.2L445.4 1010.2M436.4 1011.6L436.2 1016.4L433.8 1021.8M441.2 1011.6L441.4 1015.6M436.6 1016.6L438.8 1014.8L440.4 1016.4M442 1015.6L448.4 1022M448.4 1015.6L442 1022"/><path class="s" d="M1457 1005.6H1454.4V1008.4M1469 1005.6H1471.6V1008.4M1454.4 1019V1021.8H1457M1471.6 1019V1021.8H1469M1458.4 1008.2H1464.4L1467.8 1011.6V1019.6H1458.4ZM1464.4 1008.2V1011.6H1467.8"/><path class="s" d="M1539.6 1006.4H1545Q1547.4 1006.4 1547.4 1008.4Q1547.4 1006.4 1549.8 1006.4H1555.2V1019H1549.8Q1548 1019 1547.4 1020.6Q1546.8 1019 1545 1019H1539.6ZM1547.4 1008.4V1020.4M1541.8 1009.6H1545.2M1541.8 1012.2H1545.2M1541.8 1014.8H1545.2M1549.6 1009.6H1553M1549.6 1012.2H1553M1549.6 1014.8H1553"/><rect x="1590.6" y="1006.1" width="13.2" height="15.4" fill="#fafafa" stroke="#3b3a39" stroke-width="1.3"/><path d="M1593.4 1009.4H1601M1593.4 1012H1601M1593.4 1014.6H1601M1593.4 1017.2H1601" stroke="#605e5c" stroke-width="1.1"/><path class="s" d="M1647 1020.4H1639.6V1006.2H1655.6V1012M1639.6 1009.2H1655.6M1642 1012H1647.6M1642 1014.6H1646.4M1642 1017.2H1646"/><circle cx="1652.6" cy="1017.6" r="4.7" fill="#f3f2f1" stroke="#605e5c" stroke-width="1.1"/><path class="s" d="M1648 1017.6H1657.2M1652.6 1013V1022.2M1650.4 1013.6Q1648.6 1017.6 1650.4 1021.6M1654.8 1013.6Q1656.6 1017.6 1654.8 1021.6" style="stroke-width:0.9"/><path d="M1893.6 246.6L1898.5 241.4L1903.4 246.6ZM1893.6 985.6L1898.5 990.8L1903.4 985.6Z" fill="#1a1a1a"/><path d="M20 1046.4L28 1045.3V1054.4H20ZM29.2 1045.1L40.3 1043.6V1054.4H29.2ZM20 1055.6H28V1064.7L20 1063.6ZM29.2 1055.6H40.3V1066.4L29.2 1064.9Z" fill="#fff"/><circle cx="88" cy="1051.7" r="6.3" stroke="#111" stroke-width="1.5" fill="none"/><path d="M83.6 1056.2L75.2 1064.8" stroke="#111" stroke-width="1.6"/><path d="M440.5 1045V1048.5H452.5V1045M440.5 1064V1060.5H452.5V1064M458.5 1045V1064" stroke="#fff" stroke-width="1" fill="none"/><rect x="440.5" y="1051.5" width="12" height="7" stroke="#fff" stroke-width="1" fill="none"/><rect x="457" y="1051" width="3" height="3" fill="#fff"/><circle cx="514" cy="1054.8" r="15" fill="#fbc116"/><path d="M514 1054.8L501 1047.3A15 15 0 0 1 527 1047.3Z" fill="#e33b2e"/><path d="M501 1047.3A15 15 0 0 1 527 1047.3L527.2 1047.8H514Z" fill="#e33b2e"/><path d="M514 1054.8L501 1047.3A15 15 0 0 0 514.6 1069.8L520.6 1058.8Z" fill="#2ba24c"/><path d="M527 1047.3H514L520.6 1058.8L514.6 1069.8A15 15 0 0 0 527 1047.3Z" fill="#fbc116"/><circle cx="514" cy="1054.8" r="7.2" fill="#fff"/><circle cx="514" cy="1054.8" r="5.7" fill="#4285f4"/><path d="M562.2 1044.2Q562.2 1043 563.4 1043H572.6L574.4 1045H588.2Q589.3 1045 589.3 1046.2V1064.9H562.2Z" fill="#e8a90e"/><path d="M562.2 1047.2H573L575 1045.2H589.3V1064.9H562.2Z" fill="#ffd664"/><path d="M567 1066V1057Q567 1055.2 568.8 1055.2H583.2Q585 1055.2 585 1057V1066H581V1059.5H571.2V1066Z" fill="#3a96dd"/><defs><linearGradient id="eg" x1="0" y1="0" x2="0.6" y2="1"><stop offset="0" stop-color="#2aa6ea"/><stop offset="0.5" stop-color="#1b84d6"/><stop offset="1" stop-color="#0c59a4"/></linearGradient><linearGradient id="eg2" x1="0" y1="0.2" x2="1" y2="0.7"><stop offset="0" stop-color="#34c1ee"/><stop offset="0.55" stop-color="#45d2b0"/><stop offset="1" stop-color="#6ae85e"/></linearGradient></defs><circle cx="638.1" cy="1055" r="15.2" fill="url(#eg)"/><path d="M624 1049Q627 1040.4 638.4 1039.8Q651.6 1040.6 653.3 1053Q653.4 1060.2 646 1060.4Q640.4 1060.2 641.6 1056.2Q642.6 1050.6 636.4 1049.8Q629 1049.6 626.2 1056.6Q624.2 1053 624 1049Z" fill="url(#eg2)"/><path d="M636.8 1050.4Q630.2 1053.4 631.6 1060.6Q634 1068.2 643.4 1068.4Q648.6 1067.8 651.6 1063.2Q645.4 1066 641 1062.4Q637.6 1059.2 639.8 1055.2Q641.4 1051 636.8 1050.4Z" fill="#114a8b" opacity="0.92"/><circle cx="638.8" cy="1054.4" r="2.4" fill="#16365c"/><defs><linearGradient id="npg" x1="0" y1="0" x2="0" y2="1"><stop offset="0" stop-color="#eef3f7"/><stop offset="0.3" stop-color="#dfeaf2"/><stop offset="0.42" stop-color="#e6ee4a"/><stop offset="0.7" stop-color="#5fd02c"/><stop offset="1" stop-color="#0e8f12"/></linearGradient></defs><path d="M686.2 1042.3H700L706 1046.6L708.5 1066L686.2 1067.9Z" fill="url(#npg)" stroke="#e4e6e4" stroke-width="1"/><path d="M687.6 1044H699" stroke="#8c8c8c" stroke-width="1.2" stroke-dasharray="0.9 0.9"/><path d="M700 1042.3V1046.6H706" fill="#f4f4f4" stroke="#cfcfcf" stroke-width="0.6"/><ellipse cx="695.4" cy="1053.2" rx="4.6" ry="3.2" fill="#52dc4c"/><ellipse cx="694.6" cy="1059.6" rx="3" ry="3" fill="#6fcf3a" stroke="#3f6a1a" stroke-width="0.8"/><circle cx="698.4" cy="1050.2" r="2.3" fill="#d8dcd8" stroke="#6c6c6c" stroke-width="0.7"/><path d="M689 1056.4H702.4" stroke="#4a3a30" stroke-width="1"/><path d="M698 1059V1063.6M701 1062.6H703.6" stroke="#2c5a1c" stroke-width="1"/><path d="M704.5 1060.4L712 1044.4" stroke="#eaa818" stroke-width="2"/><path d="M712 1044.4L712.6 1043.1" stroke="#c8c8c8" stroke-width="2"/><path d="M712.6 1043.1L713.2 1041.6" stroke="#8c3030" stroke-width="2"/><rect x="754" y="1041.2" width="22.1" height="6.9" fill="#41a5ee"/><rect x="754" y="1048" width="22.1" height="6.8" fill="#2b7cd3"/><rect x="754" y="1054.8" width="22.1" height="6.8" fill="#185abd"/><rect x="754" y="1061.5" width="22.1" height="6.8" fill="#103f91"/><rect x="747" y="1047.2" width="15.1" height="15.1" rx="1" fill="#185abd"/><path d="M749.8 1051L751.9 1058.8L754.5 1051.4L757.1 1058.8L759.2 1051" stroke="#fff" stroke-width="1.5" fill="none" stroke-linejoin="miter"/><circle cx="824.6" cy="1045.4" r="4.6" fill="#7b83eb"/><circle cx="833.8" cy="1047.2" r="3.1" fill="#5059c9"/><path d="M820 1051.6H831.6V1061Q831.6 1066.2 826 1066.4Q820 1066.2 820 1061Z" fill="#7b83eb"/><path d="M831 1051.6H838.4V1059Q838.2 1063 834.4 1063.4Q831 1063.4 831 1060Z" fill="#5059c9"/><rect x="809" y="1047.2" width="14.9" height="15.1" rx="1" fill="#4b53bc"/><path d="M812.6 1051.2H820.2M816.4 1051.2V1059" stroke="#fff" stroke-width="1.6" fill="none"/><ellipse cx="831" cy="1063.9" rx="9.9" ry="8.3" fill="#d6102f"/><rect x="878" y="1041" width="11.1" height="6.8" fill="#21a366"/><rect x="889.1" y="1041" width="11.1" height="6.8" fill="#33c481"/><rect x="878" y="1047.8" width="11.1" height="6.8" fill="#107c41"/><rect x="889.1" y="1047.8" width="11.1" height="6.8" fill="#21a366"/><rect x="878" y="1054.6" width="11.1" height="6.8" fill="#185c37"/><rect x="889.1" y="1054.6" width="11.1" height="6.8" fill="#107c41"/><rect x="878" y="1061.4" width="22.2" height="6.6" fill="#185c37"/><rect x="871" y="1047.2" width="14.9" height="15.1" rx="1" fill="#107c41"/><path d="M874.8 1050.8L882 1058.8M882 1050.8L874.8 1058.8" stroke="#fff" stroke-width="1.6"/><rect x="940" y="1041" width="21.9" height="5" fill="#0364b8"/><rect x="940" y="1046" width="7.3" height="7" fill="#0a5eb0"/><rect x="947.3" y="1046" width="7.3" height="7" fill="#28a8ea"/><rect x="954.6" y="1046" width="7.3" height="7" fill="#50d9ff"/><rect x="940" y="1053" width="7.3" height="6" fill="#0a4a94"/><rect x="947.3" y="1053" width="7.3" height="6" fill="#0078d4"/><rect x="954.6" y="1053" width="7.3" height="6" fill="#28a8ea"/><path d="M940 1059H961.9V1068H940Z" fill="#1490df"/><path d="M961.9 1055.6L946 1068H961.9Z" fill="#28a8ea"/><path d="M940 1059L955 1068H940Z" fill="#0f78d4" opacity="0.7"/><rect x="933" y="1047.2" width="14.8" height="15.1" rx="1" fill="#0f6cbd"/><ellipse cx="940.3" cy="1054.8" rx="3.2" ry="3.6" stroke="#fff" stroke-width="1.6" fill="none"/><path d="M1717.6 1059.2L1725.2 1051.6L1732.8 1059.2" stroke="#fff" stroke-width="1.2" fill="none"/><path d="M1746 1051.4H1748.8L1752.4 1047.8V1062L1748.8 1058.4H1746Z" stroke="#fff" stroke-width="1.1" fill="none"/><path d="M1755.4 1052.2Q1757 1054.9 1755.4 1057.6M1758.4 1049.6Q1761 1054.9 1758.4 1060.2M1761.6 1046.8Q1765.6 1054.9 1761.6 1063" stroke="#fff" stroke-width="1.1" fill="none"/><path d="M1869.2 1045.2H1889V1060.2H1881.6L1879.1 1064.4L1876.6 1060.2H1869.2Z" fill="#fff"/><path d="M1873 1049.4H1885.2M1873 1052.6H1885.2M1873 1055.8H1881" stroke="#1b2a44" stroke-width="1.1"/></svg>
<span style="left:26.7px;top:14px;font-size:15.5px;color:#ffffff;letter-spacing:-0.646px;">AutoSave</span>
<span style="left:121.2px;top:16px;font-size:12.5px;color:#ffffff;letter-spacing:0.023px;">Off</span>
<span style="left:339.6px;top:16px;font-size:15px;color:#ffffff;letter-spacing:-0.114px;">Appendix 2. US Adult chronic survey3-17 khl  -  Read-Only</span>
<span style="left:837.6px;top:15px;font-size:15px;color:#1f3864;letter-spacing:-0.906px;">Search</span>
<span style="left:1432.6px;top:15px;font-size:15.5px;color:#ffffff;letter-spacing:-0.728px;">Hoffmann, Sandra - REE-ERS</span>
<span style="left:1643.1px;top:17px;font-size:11.5px;color:#ffffff;letter-spacing:-0.484px;">HS</span>
<span style="left:21.9px;top:55px;font-size:17px;color:#484644;letter-spacing:-1.002px;">File</span>
<span style="left:82.9px;top:55px;font-size:17px;color:#484644;letter-spacing:0.014px;">Home</span>
<span style="left:156.9px;top:55px;font-size:17px;color:#484644;letter-spacing:-0.106px;">Insert</span>
<span style="left:226.9px;top:55px;font-size:17px;color:#484644;letter-spacing:-0.324px;">Draw</span>
<span style="left:294.3px;top:55px;font-size:17px;color:#484644;letter-spacing:-0.464px;">Design</span>
<span style="left:372.9px;top:55px;font-size:17px;color:#484644;letter-spacing:-0.209px;">Layout</span>
<span style="left:452.9px;top:55px;font-size:17px;color:#484644;letter-spacing:-0.582px;">References</span>
<span style="left:562.9px;top:55px;font-size:17px;color:#484644;letter-spacing:0.049px;">Mailings</span>
<span style="left:655.1px;top:55px;font-size:17px;color:#484644;letter-spacing:-0.850px;">Review</span>
<span style="left:800.1px;top:55px;font-size:17px;color:#484644;letter-spacing:-0.323px;">Help</span>
<span style="left:863.4px;top:55px;font-size:17px;color:#484644;letter-spacing:-0.066px;">Acrobat</span>
<span style="left:735.9px;top:55px;font-size:17px;color:#323130;letter-spacing:-0.746px;font-weight:700;">View</span>
<span style="left:949.6px;top:55px;font-size:17px;color:#2b579a;letter-spacing:-0.271px;">Table Design</span>
<span style="left:1072.9px;top:55px;font-size:17px;color:#2b579a;letter-spacing:-0.209px;">Layout</span>
<span style="left:1687.8px;top:55px;font-size:16.5px;color:#2b579a;letter-spacing:-0.352px;font-weight:700;">Comments</span>
<span style="left:1823.2px;top:55px;font-size:16.5px;color:#2b579a;letter-spacing:-0.915px;font-weight:700;">Share</span>
<span style="left:20.1px;top:135px;font-size:14.5px;color:#444340;letter-spacing:-0.591px;">Read</span>
<span style="left:17.0px;top:155px;font-size:14.5px;color:#444340;letter-spacing:0.773px;">Mode</span>
<span style="left:74.1px;top:135px;font-size:14.5px;color:#444340;letter-spacing:-0.132px;">Print</span>
<span style="left:67.4px;top:155px;font-size:14.5px;color:#444340;letter-spacing:-0.109px;">Layout</span>
<span style="left:125.9px;top:135px;font-size:14.5px;color:#444340;letter-spacing:-0.181px;">Web</span>
<span style="left:119.4px;top:155px;font-size:14.5px;color:#444340;letter-spacing:-0.089px;">Layout</span>
<span style="left:195.1px;top:93px;font-size:14.5px;color:#444340;letter-spacing:0.208px;">Outline</span>
<span style="left:195.1px;top:122px;font-size:14.5px;color:#444340;letter-spacing:0.520px;">Draft</span>
<span style="left:279.0px;top:135px;font-size:14.5px;color:#444340;letter-spacing:-0.725px;">Focus</span>
<span style="left:326.0px;top:135px;font-size:14.5px;color:#444340;letter-spacing:0.041px;">Immersive</span>
<span style="left:337.2px;top:155px;font-size:14.5px;color:#444340;letter-spacing:-0.273px;">Reader</span>
<span style="left:418.6px;top:135px;font-size:14.5px;color:#444340;letter-spacing:0.134px;">Vertical</span>
<span style="left:481.8px;top:135px;font-size:14.5px;color:#444340;letter-spacing:-0.077px;">Side</span>
<span style="left:473.1px;top:155px;font-size:14.5px;color:#444340;letter-spacing:0.224px;">to Side</span>
<span style="left:569.3px;top:94px;font-size:14.5px;color:#444340;letter-spacing:-0.439px;">Ruler</span>
<span style="left:569.3px;top:123px;font-size:14.5px;color:#444340;letter-spacing:-0.052px;">Gridlines</span>
<span style="left:569.3px;top:152px;font-size:14.5px;color:#444340;letter-spacing:0.034px;">Navigation Pane</span>
<span style="left:711.9px;top:135px;font-size:14.5px;color:#444340;letter-spacing:0.674px;">Zoom</span>
<span style="left:767.0px;top:135px;font-size:14.5px;color:#444340;letter-spacing:-0.931px;">100%</span>
<span style="left:837.9px;top:93px;font-size:14.5px;color:#444340;letter-spacing:-0.430px;">One Page</span>
<span style="left:837.9px;top:122px;font-size:14.5px;color:#444340;letter-spacing:0.122px;">Multiple Pages</span>
<span style="left:837.9px;top:151px;font-size:14.5px;color:#444340;letter-spacing:0.037px;">Page Width</span>
<span style="left:979.3px;top:135px;font-size:14.5px;color:#444340;letter-spacing:0.092px;">New</span>
<span style="left:966.3px;top:155px;font-size:14.5px;color:#444340;letter-spacing:0.504px;">Window</span>
<span style="left:1028.0px;top:135px;font-size:14.5px;color:#444340;letter-spacing:0.134px;">Arrange</span>
<span style="left:1046.0px;top:155px;font-size:14.5px;color:#444340;letter-spacing:0.387px;">All</span>
<span style="left:1097.2px;top:135px;font-size:14.5px;color:#444340;letter-spacing:0.270px;">Split</span>
<span style="left:1176.8px;top:95px;font-size:14.5px;color:#444340;letter-spacing:0.062px;">View Side by Side</span>
<span style="left:1366.1px;top:135px;font-size:14.5px;color:#444340;letter-spacing:-0.104px;">Switch</span>
<span style="left:1349.9px;top:155px;font-size:14.5px;color:#444340;letter-spacing:0.279px;">Windows</span>
<span style="left:1450.1px;top:135px;font-size:14.5px;color:#444340;letter-spacing:-0.069px;">Macros</span>
<span style="left:1523.2px;top:135px;font-size:14.5px;color:#444340;letter-spacing:0.001px;">Properties</span>
<span style="left:1176.8px;top:125px;font-size:14.5px;color:#a6a4a2;letter-spacing:0.001px;">Synchronous Scrolling</span>
<span style="left:1176.8px;top:155px;font-size:14.5px;color:#a6a4a2;letter-spacing:0.060px;">Reset Window Position</span>
<span style="left:113.8px;top:185px;font-size:13px;color:#444340;letter-spacing:-0.538px;">Views</span>
<span style="left:303.9px;top:185px;font-size:13px;color:#444340;letter-spacing:-0.194px;">Immersive</span>
<span style="left:422.0px;top:185px;font-size:13px;color:#444340;letter-spacing:0.027px;">Page Movement</span>
<span style="left:598.0px;top:185px;font-size:13px;color:#444340;letter-spacing:-0.644px;">Show</span>
<span style="left:806.6px;top:185px;font-size:13px;color:#444340;letter-spacing:0.089px;">Zoom</span>
<span style="left:1172.2px;top:185px;font-size:13px;color:#444340;letter-spacing:0.030px;">Window</span>
<span style="left:1452.3px;top:185px;font-size:13px;color:#444340;letter-spacing:0.035px;">Macros</span>
<span style="left:1524.9px;top:185px;font-size:13px;color:#444340;letter-spacing:-0.270px;">SharePoint</span>
<span style="left:11.0px;top:1008px;font-size:13px;color:#605e5c;letter-spacing:-0.147px;">Page 17 of 31</span>
<span style="left:115.4px;top:1008px;font-size:13px;color:#605e5c;letter-spacing:0.087px;">4227 words</span>
<span style="left:252.1px;top:1008px;font-size:13px;color:#605e5c;letter-spacing:-0.070px;">Text Predictions: On</span>
<span style="left:452.6px;top:1008px;font-size:13px;color:#605e5c;letter-spacing:-0.116px;">Accessibility: Investigate</span>
<span style="left:1475.1px;top:1008px;font-size:13px;color:#605e5c;letter-spacing:-0.852px;">Focus</span>
<span style="left:1852.6px;top:1008px;font-size:13px;color:#605e5c;letter-spacing:-1.016px;">68%</span>
<span style="left:110.0px;top:1048px;font-size:17.5px;color:#2b2b2b;letter-spacing:0.457px;">Type here to search</span>
<span style="left:1591.6px;top:1048px;font-size:17.5px;color:#ffffff;letter-spacing:-0.270px;">41°F  Sunny</span>
<span style="left:1781.6px;top:1037px;font-size:14.5px;color:#ffffff;letter-spacing:-0.109px;">10:57 AM</span>
<span style="left:1778.4px;top:1060px;font-size:14.5px;color:#ffffff;letter-spacing:0.273px;">3/18/2023</span>
<span style="left:824.0px;top:1058px;font-size:12px;color:#ffffff;letter-spacing:0.312px;font-weight:700;">9+</span>
<span style="left:966.6px;top:210px;font-size:11.5px;color:#444444;letter-spacing:0.000px;">1</span>
<span style="left:1130.6px;top:210px;font-size:11.5px;color:#444444;letter-spacing:0.000px;">1</span>
<span style="left:1212.6px;top:210px;font-size:11.5px;color:#444444;letter-spacing:0.000px;">2</span>
<span style="left:1294.6px;top:210px;font-size:11.5px;color:#444444;letter-spacing:0.000px;">3</span>
<span style="left:1376.6px;top:210px;font-size:11.5px;color:#444444;letter-spacing:0.000px;">4</span>
<span style="left:1458.6px;top:210px;font-size:11.5px;color:#444444;letter-spacing:0.000px;">5</span>
<span style="left:1540.6px;top:210px;font-size:11.5px;color:#444444;letter-spacing:0.000px;">6</span>
<span style="left:1622.6px;top:210px;font-size:11.5px;color:#444444;letter-spacing:0.000px;">7</span>
<span style="left:755.2px;top:305px;font-size:11px;color:#8a8a8a;letter-spacing:0.299px;">OMB Control Number:</span>
<span style="left:487.6px;top:347px;font-size:15.5px;color:#000000;letter-spacing:0.229px;font-weight:700;">20.  Rating your current health</span>
<span style="left:336.8px;top:369px;font-size:11px;color:#000000;letter-spacing:-0.098px;font-weight:700;">For each of the 5 aspects of health below, please check the ONE circle best describes how you are</span>
<span style="left:336.8px;top:385px;font-size:11px;color:#000000;letter-spacing:0.032px;font-weight:700;">TODAY.</span>
<span style="left:336.8px;top:411px;font-size:11px;color:#000000;letter-spacing:0.320px;font-weight:700;">Mobility</span>
<span style="left:336.8px;top:513px;font-size:11px;color:#000000;letter-spacing:-0.262px;font-weight:700;">Self-Care</span>
<span style="left:336.8px;top:604px;font-size:11px;color:#000000;letter-spacing:-0.007px;font-weight:700;">Usual Activities (e.g., work, study, housework, family, or leisure activities)</span>
<span style="left:336.8px;top:696px;font-size:11px;color:#000000;letter-spacing:0.081px;font-weight:700;">Pain/Discomfort</span>
<span style="left:336.8px;top:798px;font-size:11px;color:#000000;letter-spacing:0.017px;font-weight:700;">Anxiety/Depression</span>
<span style="left:396.9px;top:438px;font-size:11px;color:#000000;letter-spacing:0.198px;">I have no problems in walking </span>
<span style="left:550.6px;top:438px;font-size:11px;color:#000000;letter-spacing:0.542px;">about</span>
<span style="left:396.9px;top:455px;font-size:11px;color:#000000;letter-spacing:0.189px;">I have some problems in walking </span>
<span style="left:565.4px;top:455px;font-size:11px;color:#000000;letter-spacing:0.542px;">about</span>
<span style="left:396.9px;top:472px;font-size:11px;color:#000000;letter-spacing:0.273px;">I am confined to </span>
<span style="left:482.6px;top:472px;font-size:11px;color:#000000;letter-spacing:0.270px;">bed</span>
<span style="left:396.9px;top:540px;font-size:11px;color:#000000;letter-spacing:0.255px;">I have no problems with </span>
<span style="left:522.0px;top:540px;font-size:11px;color:#000000;letter-spacing:0.202px;">self-care</span>
<span style="left:396.9px;top:557px;font-size:11px;color:#000000;letter-spacing:0.232px;">I have some problems with </span>
<span style="left:536.6px;top:557px;font-size:11px;color:#000000;letter-spacing:0.189px;">self-care</span>
<span style="left:396.9px;top:574px;font-size:11px;color:#000000;letter-spacing:0.157px;">I am unable to wash or dress </span>
<span style="left:545.6px;top:574px;font-size:11px;color:#000000;letter-spacing:0.284px;">myself</span>
<span style="left:396.9px;top:631px;font-size:11px;color:#000000;letter-spacing:0.274px;">I have no problems with performing my usual </span>
<span style="left:630.6px;top:631px;font-size:11px;color:#000000;letter-spacing:0.312px;">activities</span>
<span style="left:396.9px;top:648px;font-size:11px;color:#000000;letter-spacing:0.262px;">I have some problems with performing my usual </span>
<span style="left:645.3px;top:648px;font-size:11px;color:#000000;letter-spacing:0.312px;">activities</span>
<span style="left:396.9px;top:665px;font-size:11px;color:#000000;letter-spacing:0.255px;">I am unable to perform my usual </span>
<span style="left:565.6px;top:665px;font-size:11px;color:#000000;letter-spacing:0.312px;">activities</span>
<span style="left:396.9px;top:723px;font-size:11px;color:#000000;letter-spacing:0.158px;">I have no pain or </span>
<span style="left:484.6px;top:723px;font-size:11px;color:#000000;letter-spacing:0.472px;">discomfort</span>
<span style="left:396.9px;top:740px;font-size:11px;color:#000000;letter-spacing:0.228px;">I have moderate pain or </span>
<span style="left:521.4px;top:740px;font-size:11px;color:#000000;letter-spacing:0.472px;">discomfort</span>
<span style="left:396.9px;top:757px;font-size:11px;color:#000000;letter-spacing:0.204px;">I have extreme pain or </span>
<span style="left:513.9px;top:757px;font-size:11px;color:#000000;letter-spacing:0.528px;">discomfort</span>
<span style="left:396.9px;top:825px;font-size:11px;color:#000000;letter-spacing:0.178px;">I am not anxious or </span>
<span style="left:496.9px;top:825px;font-size:11px;color:#000000;letter-spacing:0.191px;">depressed</span>
<span style="left:396.9px;top:842px;font-size:11px;color:#000000;letter-spacing:0.229px;">I am moderately anxious or </span>
<span style="left:538.6px;top:842px;font-size:11px;color:#000000;letter-spacing:0.116px;">depressed</span>
<span style="left:396.9px;top:858px;font-size:11px;color:#000000;letter-spacing:0.190px;">I have extremely anxious or </span>
<span style="left:539.6px;top:858px;font-size:11px;color:#000000;letter-spacing:0.078px;">depressed</span>
<span style="left:1466.2px;top:305px;font-size:11px;color:#8a8a8a;letter-spacing:0.299px;">OMB Control Number:</span>
<span style="left:1230.6px;top:347px;font-size:15.5px;color:#000000;letter-spacing:0.133px;font-weight:700;">21.  Choice 3 (the risk)</span>
<span style="left:1047.6px;top:394px;font-size:11px;color:#000000;letter-spacing:0.040px;font-weight:700;">Imagine that you have two options:</span>
<span style="left:1047.6px;top:420px;font-size:11px;color:#000000;letter-spacing:0.053px;font-weight:700;">Option A</span>
<span style="left:1096.9px;top:420px;font-size:11px;color:#000000;letter-spacing:0.197px;">involves a period of long-term illness caused by a foodborne illness.</span>
<span style="left:1047.6px;top:446px;font-size:11px;color:#000000;letter-spacing:-0.105px;font-weight:700;">Option B</span>
<span style="left:1096.3px;top:446px;font-size:11px;color:#000000;letter-spacing:0.271px;">involves a period of current health, but there is a cost to keeping your current health.</span>
<span style="left:1047.6px;top:471px;font-size:11px;color:#000000;letter-spacing:0.179px;">These figures represent the chances posed in Option A and Option B.</span>
<span style="left:1121.6px;top:505px;font-size:11px;color:#000000;letter-spacing:0.053px;font-weight:700;">Option A</span>
<span style="left:1068.0px;top:531px;font-size:11px;color:#000000;letter-spacing:0.160px;">Chances of having a long-term</span>
<span style="left:1087.0px;top:547px;font-size:11px;color:#000000;letter-spacing:0.354px;">health outcome after a</span>
<span style="left:1101.2px;top:564px;font-size:11px;color:#000000;letter-spacing:0.296px;">foodborne illness</span>
<span style="left:1106.0px;top:580px;font-size:11px;color:#000000;letter-spacing:0.156px;font-weight:700;">31 out of 1,000</span>
<span style="left:1391.2px;top:502px;font-size:11px;color:#000000;letter-spacing:-0.105px;font-weight:700;">Option B</span>
<span style="left:1337.2px;top:528px;font-size:11px;color:#000000;letter-spacing:0.150px;">Chances of having a long-term</span>
<span style="left:1355.9px;top:544px;font-size:11px;color:#000000;letter-spacing:0.354px;">health outcome after a</span>
<span style="left:1370.4px;top:561px;font-size:11px;color:#000000;letter-spacing:0.277px;">foodborne illness</span>
<span style="left:1377.9px;top:577px;font-size:11px;color:#000000;letter-spacing:0.146px;font-weight:700;">0 out of 1,000</span>
</div></body></html>
